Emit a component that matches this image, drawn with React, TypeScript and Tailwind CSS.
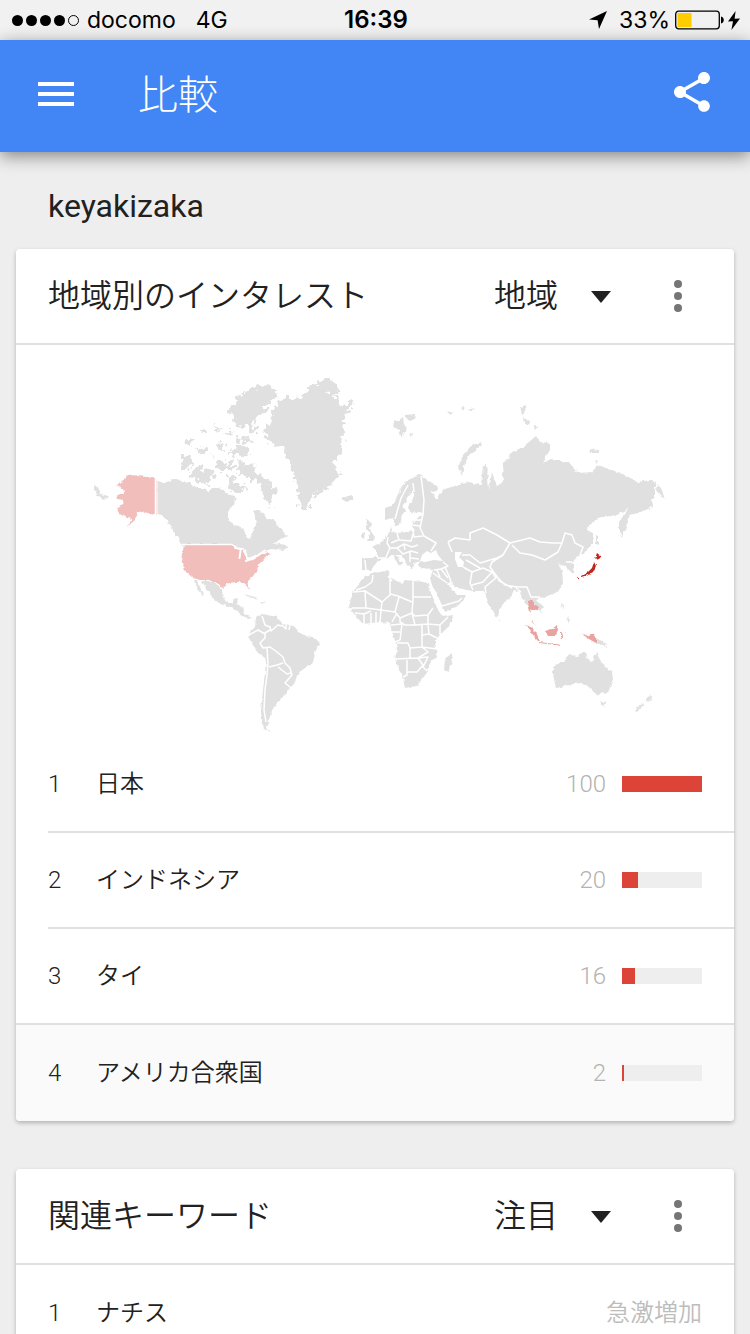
import React from "react";
import { MdMenu, MdShare } from "react-icons/md";

const regions = [
    { name: "日本", value: 100 },
    { name: "インドネシア", value: 20 },
    { name: "タイ", value: 16 },
    { name: "アメリカ合衆国", value: 2 },
];

const keywords = [{ name: "ナチス", change: "急激増加" }];

function StatusBar() {
    return (
        <div className="grid h-10 shrink-0 grid-cols-3 items-center bg-[#f1f1f1] pl-3 pr-[10px] font-['Inter','Liberation_Sans',sans-serif] text-[23px] leading-8 text-black">
            <div className="flex items-center gap-2 whitespace-nowrap">
                <div className="flex items-center gap-[3px]">
                    <span className="h-[11px] w-[11px] rounded-full bg-black" />
                    <span className="h-[11px] w-[11px] rounded-full bg-black" />
                    <span className="h-[11px] w-[11px] rounded-full bg-black" />
                    <span className="h-[11px] w-[11px] rounded-full bg-black" />
                    <span className="h-[11px] w-[11px] rounded-full border border-black" />
                </div>
                <span>docomo</span>
                <span className="ml-3">4G</span>
            </div>
            <div className="text-center text-2xl font-semibold">16:39</div>
            <div className="flex items-center justify-end">
                <svg className="mr-3 h-[18px] w-[18px]" viewBox="0 0 18 18">
                    <path d="M18 0 L10 18 L8.6 9.2 L0 8.4 Z" />
                </svg>
                <span>33%</span>
                <svg className="ml-1 h-5 w-[50px]" viewBox="0 0 50 20">
                    <rect x="1.7" y="1.2" width="43.6" height="17.6" rx="3" fill="none" stroke="#000" strokeWidth="1.3" />
                    <rect x="3.5" y="3" width="14" height="14" rx="1" fill="#ffcc00" />
                    <path d="M47 6.5 a3.6 3.6 0 0 1 0 7 Z" />
                </svg>
                <svg className="ml-1 h-[19px] w-3" viewBox="0 0 12 19">
                    <path d="M7.6 0 L0 10.6 L5 10.2 L3.4 19 L12 7.4 L6.6 7.8 Z" />
                </svg>
            </div>
        </div>
    );
}

function AppBar() {
    return (
        <header className="relative z-10 flex h-28 shrink-0 items-center bg-[#4285f4] pl-8 pr-[34px] text-white shadow-[0_4px_16px_rgba(0,0,0,0.45)]">
            <button type="button" aria-label="メニュー" className="pb-1">
                <MdMenu className="h-12 w-12" />
            </button>
            <h1 className="ml-[58px] flex-1 text-[40px] font-light leading-[56px]">
                比較
            </h1>
            <button type="button" aria-label="共有" className="pb-2">
                <MdShare className="h-12 w-12" />
            </button>
        </header>
    );
}

function CardHeader({ title, option, label }: { title: string; option: string; label: string }) {
    return (
        <div className="flex h-24 items-center border-b-2 border-[#e0e0e0] px-8 text-[32px] font-[350] leading-10">
            <h2 className="flex-1">{title}</h2>
            <div className="relative">
                <select
                    aria-label={label}
                    className="h-12 w-[120px] appearance-none bg-transparent"
                >
                    <option>{option}</option>
                </select>
                <svg
                    className="pointer-events-none absolute right-[3px] top-[19px] h-3 w-5 text-[#212121]"
                    viewBox="0 0 20 12"
                    fill="currentColor"
                >
                    <path d="M0 0 H20 L10 12 Z" />
                </svg>
            </div>
            <button
                type="button"
                aria-label="その他"
                className="ml-10 flex h-12 w-12 items-center justify-center text-[#757575]"
            >
                <svg className="h-8 w-2" viewBox="0 0 8 32" fill="currentColor">
                    <circle cx="4" cy="4" r="4" />
                    <circle cx="4" cy="16" r="4" />
                    <circle cx="4" cy="28" r="4" />
                </svg>
            </button>
        </div>
    );
}

function WorldMap() {
    return (
        <svg
            className="block w-full"
            viewBox="16 345 718 392"
            role="img"
            aria-label="世界地図"
        >
            <defs>
                <filter id="coast" x="0" y="0" width="1" height="1">
                    <feTurbulence type="fractalNoise" baseFrequency="0.22" numOctaves="2" seed="4" result="n" />
                    <feDisplacementMap in="SourceGraphic" in2="n" scale="4" xChannelSelector="R" yChannelSelector="G" />
                </filter>
                <filter id="arctic" x="0" y="0" width="1" height="1">
                    <feTurbulence type="fractalNoise" baseFrequency="0.2" numOctaves="2" seed="9" result="n" />
                    <feDisplacementMap in="SourceGraphic" in2="n" scale="14" xChannelSelector="R" yChannelSelector="G" />
                </filter>
            </defs>

            {/* arctic islands and Greenland */}
            <g fill="#e0e0e0" filter="url(#arctic)">
                <path d="M237 397 L253 387 L270 385 L278 392 L270 403 L262 413 L257 417 L253 422 L257 430 L250 433 L246 425 L240 427 L232 418 L228 408 L236 405 Z" />
                <path d="M237 462 L243 460 L246 467 L253 462 L255 470 L267 480 L277 492 L270 497 L272 508 L263 498 L262 485 L252 477 L240 477 Z" />
                <path d="M182 457 L188 456 L194 460 L192 466 L187 472 L181 468 Z" />
                <path d="M195 465 L204 469 L213 468 L215 478 L207 484 L200 480 L191 477 Z" />
                <path d="M186 443 L193 437 L195 441 L188 446 Z M198 432 L204 428 L205 432 Z M212 424 L217 427 L222 432 L216 431 Z M197 450 L203 446 L208 452 L201 455 Z M217 444 L224 443 L222 452 L218 450 Z M224 434 L231 429 L232 435 Z M229 451 L240 447 L250 450 L247 456 L232 455 Z M217 462 L224 460 L227 470 L220 470 Z M226 478 L233 476 L238 484 L246 485 L243 492 L232 492 Z M228 462 L233 460 L233 470 L228 472 Z M238 439 L250 438 L252 443 L240 444 Z M209 455 L215 453 L212 459 Z" />
                <path d="M273 408 L282 398 L298 398 L310 388 L323 378 L330 378 L335 383 L340 392 L327 397 L337 398 L340 407 L353 400 L355 404 L345 412 L343 432 L342 452 L333 462 L340 475 L335 482 L322 492 L312 497 L307 510 L300 510 L298 488 L292 468 L283 447 L270 443 L263 430 L272 423 L275 415 Z" />
            </g>
            <path d="M275 412 L284 401 L299 401 L314 388 L331 395 L337 410 L341 432 L339 452 L331 464 L333 478 L311 494 L306 509 L302 509 L299 488 L293 468 L284 446 L271 440 L268 431 Z" fill="#e0e0e0" />

            <g fill="#e0e0e0" filter="url(#coast)">
                <path d="M393 420 L398 421 L403 417 L404 425 L407 428 L402 438 L399 430 L394 427 Z M405 415 L416 414 L415 420 L408 421 Z M409 434 L413 433 L412 437 Z M447 411 L453 413 L450 415 Z M461 407 L465 408 L462 410 Z M468 410 L475 408 L470 412 Z" />
                <path d="M482 442 L472 445 L463 455 L458 468 L462 475 L464 465 L469 455 L482 445 Z" />
                <path d="M341 498 L352 495 L354 499 L347 503 Z" />
                <path d="M520 407 L525 405 L526 412 L522 415 Z M523 418 L530 421 L529 426 L524 423 Z M533 425 L538 426 L535 430 Z M589 449 L598 450 L600 453 L590 453 Z M604 451 L609 453 Z M595 460 L598 461 L596 463 Z M657 484 L661 488 L665 499 L660 495 L656 490 Z" />
                <path d="M94 485 L98 487 L101 494 L108 496 L104 500 L98 496 L95 491 Z" />

                {/* Canada, Mexico, Central America */}
                <path d="M156 480 L163 483 L177 479 L183 482 L190 483 L197 488 L205 488 L208 492 L212 488 L220 488 L227 493 L237 498 L233 505 L228 512 L228 520 L235 525 L243 528 L248 539 L252 538 L253 530 L256 525 L254 510 L263 512 L267 520 L273 518 L277 525 L282 530 L287 536 L280 540 L273 545 L280 544 L289 546 L284 550 L271 549 L260 553 L252 558 L248 557 L247 550 L238 548 L232 546 L182 546 L177 537 L173 530 L168 522 L162 515 L156 514 Z" />
                <path d="M202 581 L209 581 L218 585 L222 590 L223 597 L226 602 L232 603 L235 598 L239 599 L236 605 L242 607 L244 614 L252 618 L248 619 L239 613 L232 607 L220 604 L213 598 L207 590 Z" />
                <path d="M194 580 L197 581 L204 595 L202 595 L197 587 Z M244 594 L252 596 L259 600 L249 597 Z M261 601 L267 602 L263 603 Z" />

                {/* South America */}
                <path d="M256 617 L263 614 L277 617 L282 623 L293 626 L298 632 L307 636 L315 638 L320 643 L315 652 L313 663 L305 668 L298 673 L296 680 L290 688 L286 694 L280 700 L277 703 L272 710 L271 717 L266 727 L272 733 L264 728 L261 721 L261 710 L263 690 L266 663 L265 658 L257 652 L250 640 L249 633 L255 627 Z" />

                {/* Europe and Asia */}
                <path d="M420 475 L408 480 L400 490 L393 505 L385 508 L385 520 L393 518 L395 526 L400 525 L402 515 L405 511 L403 505 L409 495 L414 490 L414 497 L408 507 L410 513 L420 512 L424 514 L414 520 L412 526 L415 531 L398 533 L392 532 L391 525 L388 535 L380 543 L371 547 L377 552 L377 558 L362 558 L362 570 L370 571 L377 562 L387 558 L392 555 L400 567 L403 563 L395 555 L402 555 L408 565 L412 570 L413 563 L420 561 L418 566 L422 569 L433 570 L430 578 L432 585 L442 605 L445 612 L462 603 L466 595 L457 595 L447 583 L450 582 L457 588 L467 590 L473 591 L484 591 L486 595 L488 602 L497 618 L502 605 L510 598 L514 590 L520 592 L525 603 L529 607 L533 604 L538 608 L541 613 L543 606 L536 599 L547 596 L558 592 L563 582 L562 570 L558 563 L566 567 L572 573 L576 573 L572 562 L580 555 L585 553 L593 543 L593 533 L587 530 L597 518 L617 515 L628 508 L619 522 L619 532 L622 537 L627 525 L630 515 L638 513 L653 507 L652 500 L655 497 L655 482 L650 480 L637 482 L620 473 L597 465 L593 472 L577 473 L570 462 L550 460 L542 463 L550 450 L550 443 L540 442 L536 436 L523 447 L512 452 L508 460 L502 462 L503 480 L497 487 L492 472 L489 490 L487 465 L483 465 L481 485 L468 482 L452 487 L443 490 L437 499 L430 492 L438 491 L437 486 Z" />
                <path d="M367 519 L371 523 L370 530 L375 537 L373 541 L367 541 L370 534 L366 527 Z M361 532 L365 532 L364 539 L361 538 Z M596 534 L598 535 L598 545 L596 544 Z M500 619 L502 621 L500 622 Z" />

                {/* Africa */}
                <path d="M372 573 L387 571 L390 572 L390 578 L402 583 L405 580 L415 581 L430 583 L429 587 L435 603 L438 610 L443 617 L454 615 L450 625 L440 635 L435 640 L437 657 L428 665 L428 671 L423 678 L417 686 L405 688 L403 678 L395 660 L397 647 L392 632 L390 623 L380 622 L363 624 L353 613 L349 607 L352 593 L360 583 L365 577 Z" />
                <path d="M452 653 L452 660 L448 672 L444 670 L445 659 Z" />

                {/* Oceania */}
                <path d="M553 667 L563 661 L570 655 L578 656 L583 651 L587 654 L586 658 L592 662 L597 652 L600 660 L606 667 L612 672 L613 679 L608 693 L597 695 L590 688 L586 685 L580 683 L568 685 L557 688 L555 685 L553 673 Z" />
                <path d="M601 702 L606 702 L603 706 Z M650 695 L652 698 L647 702 L646 699 Z M644 702 L642 707 L637 712 L635 710 Z M596 638 L604 642 L608 648 L602 644 L596 644 Z M562 603 L565 607 L563 609 Z M567 617 L571 620 L568 622 Z" />
            </g>

            {/* inland seas */}
            <g fill="#fff">
                <path d="M422 555 L427 551 L431 553 L436 550 L438 555 L443 561 L434 560 L425 562 L420 561 Z" />
                <path d="M455 552 L462 552 L459 557 L464 562 L463 567 L458 567 L455 559 Z" />
                <path d="M408 513 L422 514 L412 517 L409 526 L405 530 L400 530 L404 523 Z" />
            </g>

            {/* country borders */}
            <g fill="none" stroke="#fff" strokeWidth="1.5" strokeLinejoin="round">
                <path d="M262 616 L265 625 L270 627 L271 631 L278 625 L282 626 M286 624 L286 629 L282 625 M290 625 L289 630 M270 630 L265 633 L265 638 L260 643 L263 648 L270 647 L277 652 L283 657 L285 663 L290 668 L292 675 L285 683 L291 688 M267 648 L268 663 L267 675 L265 690 L264 710 L266 722 M269 667 L277 665 L283 663 M278 667 L287 674 L291 673 M249 635 L258 630 L265 634" />
                <path d="M373 575 L372 582 L365 587 L356 590 M353 592 L365 591 L366 608 L352 608 M365 591 L382 602 L390 595 L390 572 M388 576 L392 581 M390 594 L398 596 L412 602 M413 581 L413 600 L412 613 M413 597 L431 597 M382 602 L381 610 L395 612 L399 597 M395 612 L400 618 L412 613 L415 616 L428 615 L433 608 M366 608 L381 610 M397 613 L392 622 M381 610 L380 622 M364 613 L364 624 M371 613 L371 624 M376 612 L376 623 M355 613 L364 614 L371 611 M400 618 L400 622 L405 625 L415 625 L428 624 L440 625 L448 617 M412 613 L415 625 M428 615 L428 624 L429 634 L437 638 M440 625 L440 635 M391 625 L402 624 L400 640 L395 642 M392 632 L400 632 M422 625 L422 647 L410 648 L408 643 L397 643 M395 659 L418 658 L428 652 L422 647 M410 648 L410 659 M422 635 L429 634 M422 647 L437 649 M407 660 L407 675 L403 677 M407 672 L417 672 L423 665 L418 658 L428 657 L423 667 L427 671" />
                <path d="M448 542 L455 538 L470 540 L470 533 L483 528 L497 535 L510 543 L530 538 L540 542 L553 543 L562 543 L565 533 L572 535 L575 543 L583 547 L580 555 M512 545 L520 553 L532 555 L545 560 L558 552 L562 543 M510 543 L503 555 L492 562 L490 567 L498 578 L505 585 L517 587 L527 587 L531 597 L540 597 M448 542 L452 552 M462 555 L470 555 L480 563 L497 558 L503 555 M466 560 L480 568 M445 567 L449 576 L451 582 M463 567 L472 572 L470 583 L473 590 M472 572 L483 568 L492 572 L483 582 L472 585 M492 572 L496 578 L485 587 L486 593 M498 580 L512 588 M433 573 L447 583 M442 606 L459 601 L462 598 M516 588 L521 592 M572 562 L566 562" />
                <path d="M421 476 L424 500 L423 514 L420 528 L424 536 L436 543 L431 551 M413 483 L414 492 M408 485 L401 498 L395 519 M412 520 L421 520 M412 525 L420 526 M413 531 L414 537 L423 536 M397 533 L399 540 L411 541 L413 534 M388 537 L387 543 L390 548 L386 557 M390 548 L397 548 L404 544 L412 547 L418 545 M398 540 L391 543 M397 548 L403 554 L411 551 L418 553 M404 544 L405 550 M410 551 L410 562 M411 558 L419 559 M377 558 L387 558 M365 560 L366 571 M443 562 L448 566 L441 569 L434 570 M437 570 L440 577 M441 569 L448 578" />
            </g>

            {/* shaded countries */}
            <g filter="url(#coast)">
                <path fill="#f1bebb" d="M132 474 L138 476 L147 477 L157 479 L157 515 L150 514 L142 511 L137 513 L135 520 L127 527 L132 519 L127 518 L120 513 L117 508 L123 505 L124 500 L117 499 L116 496 L120 494 L124 494 L123 489 L117 486 L122 481 L127 476 Z" />
                <path fill="#f1bebb" d="M184 544 L232 544 L237 549 L244 551 L247 555 L247 561 L253 560 L260 556 L268 551 L270 554 L265 558 L258 565 L257 572 L250 579 L247 582 L249 590 L247 588 L244 582 L237 582 L228 583 L222 588 L218 583 L213 582 L209 580 L200 580 L193 578 L186 572 L182 563 L183 552 Z" />
                <path fill="#e9a39e" d="M528 601 L532 600 L534 605 L538 607 L537 610 L532 609 L530 613 L529 607 Z M530 617 L535 626 L532 622 Z M526 624 L530 626 L536 632 L540 641 L537 640 L531 632 Z M540 642 L562 645 L562 646 L540 643 Z M545 631 L552 629 L557 625 L558 630 L555 636 L548 636 Z M561 632 L565 632 L562 634 L564 639 L561 637 Z M580 633 L587 636 L591 634 L596 637 L596 643 L589 639 Z" />
                <path fill="#c0271c" d="M597 553 L602 557 L597 560 L595 558 Z M594 562 L596 566 L593 572 L588 575 L581 577 L581 576 L588 572 L592 568 Z M577 577 L579 577 L579 580 Z" />
            </g>

            {/* Alaska, 49th parallel, great lakes */}
            <g fill="none" stroke="#fff" strokeWidth="1.5" strokeLinecap="round">
                <path d="M155.5 478 V516" />
                <path d="M182 544.5 H232 L236 547" />
                <path d="M235 548 L242 549 M240.5 551 L239.5 558 M244 551 L246.5 556 M246 561 L251 558.5 M252 557.5 L257 556 L265 550.5" strokeWidth="2" />
            </g>
            <path d="M157 480 V515" stroke="#fff" strokeWidth="1" />
        </svg>
    );
}

export default function App() {
    return (
        <div
            lang="ja"
            className="flex h-screen flex-col bg-[#eeeeee] font-['Roboto','Noto_Sans_CJK_JP',sans-serif] text-[#212121] antialiased"
        >
            <StatusBar />
            <AppBar />
            <main className="flex-1 overflow-y-auto px-4 pb-4 [scrollbar-width:none]">
                <p className="px-8 pb-[23px] pt-[34px] text-[32px] leading-10">
                    keyakizaka
                </p>

                <section className="overflow-hidden rounded bg-white shadow-[0_2px_4px_rgba(0,0,0,0.25)]">
                    <CardHeader title="地域別のインタレスト" option="地域" label="表示単位" />
                    <WorldMap />
                    <ol>
                        {regions.map((region, i) => (
                            <li
                                key={region.name}
                                className="group pl-8 text-2xl font-[350] leading-8 nth-3:border-b-2 nth-3:border-[#e0e0e0] last:bg-[#fafafa]"
                            >
                                <div className="flex h-24 items-center border-b-2 border-[#e0e0e0] pr-8 group-nth-3:h-[94px] group-nth-3:border-b-0 group-last:border-b-0">
                                    <span className="w-12">{i + 1}</span>
                                    <span className="flex-1">{region.name}</span>
                                    <span className="font-light text-[#b3b3b3]">{region.value}</span>
                                    <div className="ml-4 h-4 w-20 bg-[#eeeeee]">
                                        <div
                                            className="h-full bg-[#db4437]"
                                            style={{ width: `${region.value}%` }}
                                        />
                                    </div>
                                </div>
                            </li>
                        ))}
                    </ol>
                </section>

                <section className="mt-12 overflow-hidden rounded bg-white shadow-[0_2px_4px_rgba(0,0,0,0.25)]">
                    <CardHeader title="関連キーワード" option="注目" label="並べ替え" />
                    <ol>
                        {keywords.map((keyword, i) => (
                            <li
                                key={keyword.name}
                                className="flex h-24 items-center px-8 text-2xl font-[350] leading-8"
                            >
                                <span className="w-12">{i + 1}</span>
                                <span className="flex-1">{keyword.name}</span>
                                <span className="text-[#bdbdbd]">{keyword.change}</span>
                            </li>
                        ))}
                    </ol>
                </section>
            </main>
        </div>
    );
}
